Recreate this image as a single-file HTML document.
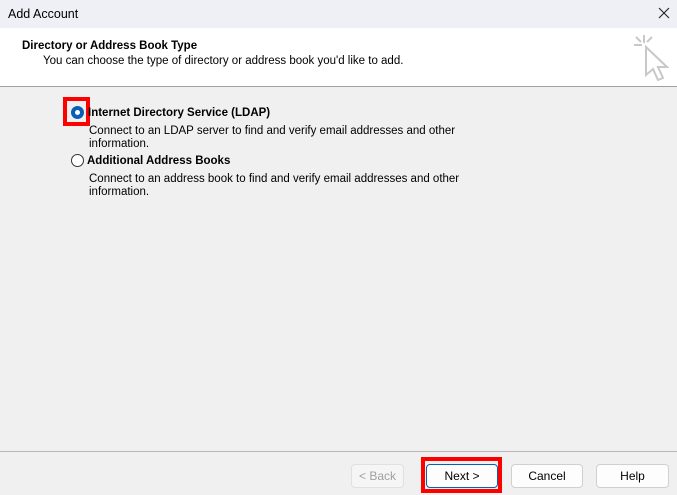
<!DOCTYPE html>
<html><head><style>
*{margin:0;padding:0;box-sizing:border-box}
body{width:677px;height:495px;overflow:hidden;background:#f0f0f0;font-family:"Liberation Sans",sans-serif;font-size:12px;color:#000;position:relative}
.a{position:absolute;white-space:nowrap}
.btn{position:absolute;top:464px;height:24px;border:1px solid #d0d0d0;border-radius:4px;background:#fdfdfd;text-align:center;line-height:23px;font-size:12px}
</style></head><body>
<div class="a" style="left:0;top:0;width:677px;height:28px;background:#eef0f6"></div>
<div class="a" style="left:8px;top:7px;font-size:12.5px">Add Account</div>
<svg class="a" style="left:658px;top:7px" width="12" height="12"><path d="M1 1L11 11M11 1L1 11" stroke="#222" stroke-width="1.1"/></svg>
<div class="a" style="left:0;top:28px;width:677px;height:59px;background:#fff;border-bottom:1px solid #a0a0a0"></div>
<div class="a" style="left:22px;top:40px;font-weight:bold;font-size:11.5px">Directory or Address Book Type</div>
<div class="a" style="left:43px;top:55px;font-size:11.5px">You can choose the type of directory or address book you'd like to add.</div>
<svg class="a" style="left:630px;top:33px" width="40" height="52"><g stroke="#c8c8c8" stroke-width="2" fill="none"><path d="M14 2v8M4 12h8M6 4l5 5M22 4l-5 5"/><path d="M16 14l0 28 7-6 5 11 5-2-5-11 9 0z" fill="#fff"/></g></svg>
<div class="a" style="left:71px;top:106px;width:13px;height:13px;border-radius:50%;background:#0a5fb4"></div>
<div class="a" style="left:75px;top:110px;width:5px;height:5px;border-radius:50%;background:#fff"></div>
<div class="a" style="left:63px;top:97px;width:27px;height:29px;border:4px solid #f00"></div>
<div class="a" style="left:88px;top:107px;font-weight:bold;font-size:11.5px">Internet Directory Service (LDAP)</div>
<div class="a" style="left:89px;top:125px;font-size:11.5px;line-height:13px">Connect to an LDAP server to find and verify email addresses and other<br>information.</div>
<div class="a" style="left:71px;top:154px;width:13px;height:13px;border-radius:50%;border:1px solid #333;background:#fff"></div>
<div class="a" style="left:87px;top:155px;font-weight:bold;font-size:11.5px">Additional Address Books</div>
<div class="a" style="left:89px;top:173px;font-size:11.5px;line-height:13px">Connect to an address book to find and verify email addresses and other<br>information.</div>
<div class="a" style="left:0;top:451px;width:677px;height:1px;background:#b8b8b8"></div>
<div class="btn" style="left:351px;width:53px;color:#a0a0a0;background:#f5f5f5;border-color:#e0e0e0">&lt; Back</div>
<div class="btn" style="left:426px;width:72px;border-color:#0a5fb4">Next &gt;</div>
<div class="a" style="left:421px;top:457px;width:81px;height:36px;border:4px solid #f00"></div>
<div class="btn" style="left:511px;width:72px">Cancel</div>
<div class="btn" style="left:596px;width:73px">Help</div>
</body></html>
